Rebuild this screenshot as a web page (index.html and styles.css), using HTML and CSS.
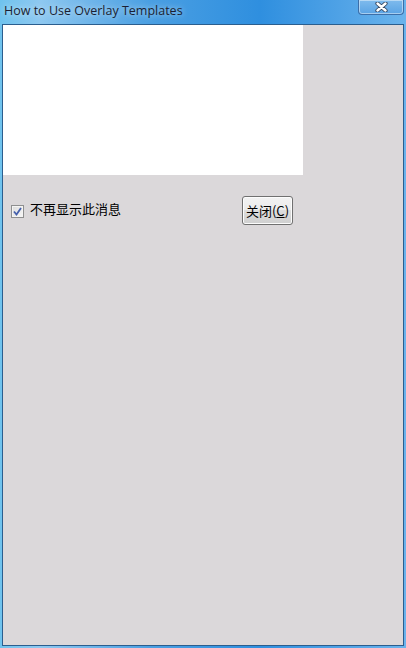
FILE: index.html
```html
<!DOCTYPE html>
<html lang="zh-CN">
<head>
    <meta charset="UTF-8">
    <meta name="viewport" content="width=device-width, initial-scale=1.0">
    <title>How to Use Overlay Templates</title>
    <link rel="stylesheet" href="styles.css">
</head>
<body>
    <div class="window">
        <div class="titlebar">
            <span class="title">How to Use Overlay Templates</span>
            <button class="close-btn" title="Close">
                <svg width="13" height="10" viewBox="0 0 13 10">
                    <path d="M2.5 1.5 L10.5 8.5 M10.5 1.5 L2.5 8.5" stroke="#33455f" stroke-width="4.2" stroke-linecap="round"/>
                    <path d="M2.5 1.5 L10.5 8.5 M10.5 1.5 L2.5 8.5" stroke="#fff" stroke-width="2.4" stroke-linecap="round"/>
                </svg>
            </button>
        </div>
        <main class="client">
            <div class="preview"></div>
            <div class="options">
                <label class="check">
                    <input type="checkbox" checked>
                    <span class="box">
                        <svg width="9" height="9" viewBox="0 0 9 9">
                            <path d="M1 4.5 L3.5 7.5 L8 1" fill="none" stroke="#4560ac" stroke-width="1.8"/>
                        </svg>
                    </span>
                    不再显示此消息
                </label>
                <button class="btn">关闭(<u>C</u>)</button>
            </div>
        </main>
    </div>
</body>
</html>
```

FILE: styles.css
```css
html, body {
    margin: 0;
    height: 100%;
    overflow: hidden;
}
body {
    font-family: "Noto Sans CJK SC", "Noto Sans", sans-serif;
    font-size: 13px;
    color: #000;
}
.window {
    box-sizing: border-box;
    width: 406px;
    height: 648px;
    display: flex;
    flex-direction: column;
    padding: 0 2px 2px 2px;
    background: linear-gradient(90deg, #6fc3ee 0px, #8ec8f0 40px, #4a9fe2 150px, #2f8fdf 260px, #4fa2e6 340px, #6ab3ec 406px);
}
.titlebar {
    height: 24px;
    display: flex;
    align-items: flex-start;
    justify-content: space-between;
    flex-shrink: 0;
}
.title {
    font-family: "Open Sans", "Noto Sans", sans-serif;
    font-size: 12.5px;
    line-height: 21px;
    padding-left: 2px;
    color: #1a1f33;
    text-shadow: 0 0 6px rgba(255, 255, 255, 0.7);
}
.close-btn {
    width: 46px;
    height: 15px;
    padding: 0;
    border: 1px solid #3c6ea8;
    border-top: none;
    border-radius: 0 0 4px 4px;
    background: linear-gradient(#7fbbed, #5aa3e4);
    box-shadow: inset 0 0 0 1px rgba(255, 255, 255, 0.45);
    display: flex;
    align-items: center;
    justify-content: center;
}
.client {
    flex: 1;
    background: #dbd8da;
    border: 1px solid #2b5e8e;
    display: flex;
    flex-direction: column;
}
.preview {
    width: 300px;
    height: 150px;
    background: #fff;
}
.options {
    width: 300px;
    box-sizing: border-box;
    display: flex;
    align-items: center;
    justify-content: space-between;
    padding: 21px 10px 0 8px;
}
.check {
    display: flex;
    align-items: center;
    gap: 6px;
    line-height: 16px;
    margin-top: -3px;
}
.check input {
    display: none;
}
.box {
    box-sizing: border-box;
    width: 13px;
    height: 13px;
    margin-top: 4px;
    border: 1px solid #8e8f8f;
    background: linear-gradient(135deg, #dcdcdc, #f7f7f7);
    box-shadow: inset 0 0 0 1px #f4f4f4;
    display: flex;
    align-items: center;
    justify-content: center;
}
.btn {
    width: 51px;
    height: 29px;
    padding: 0;
    font-family: "Noto Sans CJK SC", "Noto Sans", sans-serif;
    font-size: 13px;
    color: #000;
    border: 1px solid #707070;
    border-radius: 3px;
    background: linear-gradient(#f2f2f2 0%, #ebebeb 50%, #dddddd 50%, #cfcfcf 100%);
    box-shadow: inset 0 0 0 1px #fcfcfc;
}
.btn u {
    text-decoration-thickness: 1px;
    text-underline-offset: 1px;
}
```
